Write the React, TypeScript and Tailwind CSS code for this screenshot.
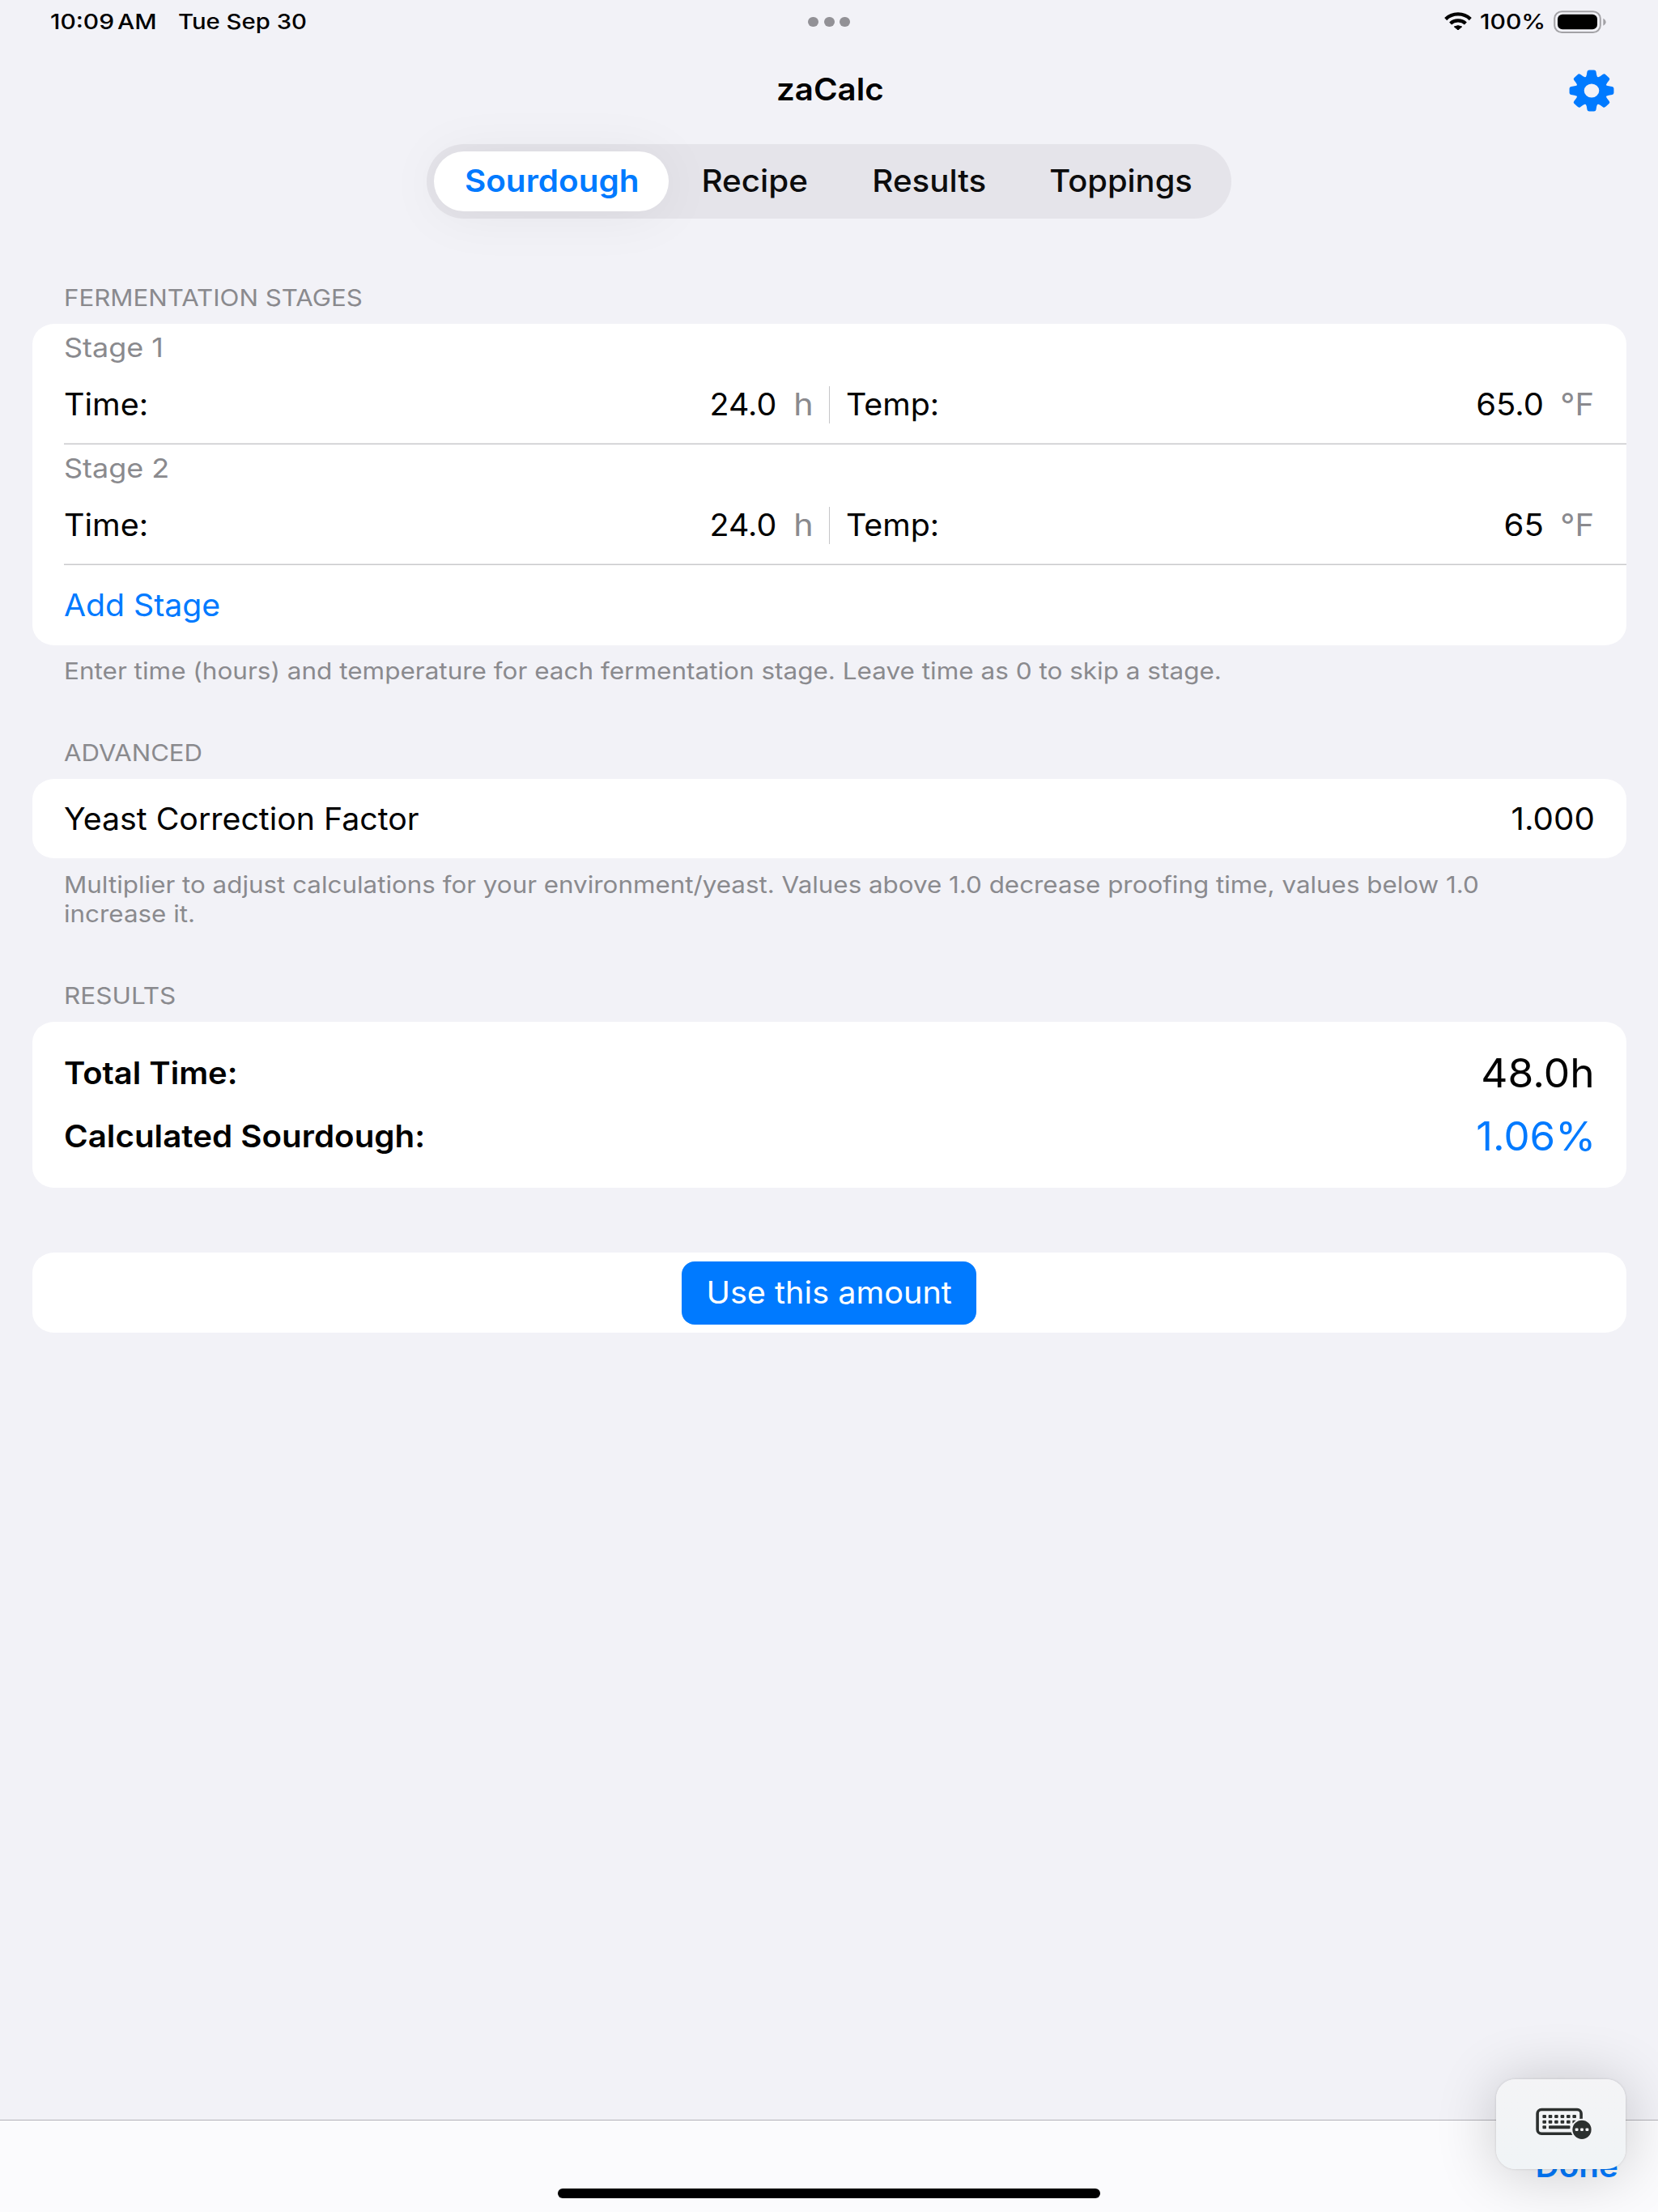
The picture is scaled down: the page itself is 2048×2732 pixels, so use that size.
import type { ReactNode } from "react";

const TOOTH =
  "M-7.8 -15.5Q-6 -17.3 -5.7 -19.5L-5.1 -23.4Q-4.7 -25.4 -2.7 -25.4H2.7Q4.7 -25.4 5.1 -23.4L5.7 -19.5Q6 -17.3 7.8 -15.5Z";

function GearIcon() {
  return (
    <svg className="h-[52px] w-[56px]" viewBox="0 0 56 52">
      <g transform="translate(28 26) scale(1.08 1)" fill="#007aff">
        <circle r="17.9" />
        {[0, 45, 90, 135, 180, 225, 270, 315].map((a) => (
          <path key={a} d={TOOTH} transform={`rotate(${a})`} />
        ))}
        <circle r="8.6" fill="#f2f2f7" />
      </g>
    </svg>
  );
}

function WifiIcon() {
  return (
    <svg className="h-[24px] w-[34px]" viewBox="0 0 34 24" fill="none" stroke="#000">
      <path d="M1.7 8.6A21 19.5 0 0 1 32.3 8.6" strokeWidth="4.3" />
      <path d="M7.6 14A13.3 12.3 0 0 1 26.4 14" strokeWidth="4.3" />
      <path d="M17 21.9L12.3 18Q17 15.4 21.7 18Z" fill="#000" strokeWidth="1" strokeLinejoin="round" />
    </svg>
  );
}

function BatteryIcon() {
  return (
    <svg className="h-[30px] w-[66px]" viewBox="0 0 66 30">
      <rect x="1.2" y="2.2" width="56.6" height="25.8" rx="9" ry="8.5" fill="none" stroke="#a3a2a6" strokeWidth="2" />
      <rect x="5" y="5.8" width="49" height="18.4" rx="6" ry="5.6" fill="#000" />
      <path d="M61.3 10.8Q64.6 12.4 64.6 15.3T61.3 19.8Z" fill="#a3a2a6" />
    </svg>
  );
}

function KeyboardIcon() {
  return (
    <svg className="h-[42px] w-[72px]" viewBox="0 0 72 42">
      <rect x="3.1" y="3.5" width="54" height="29.7" rx="5" fill="none" stroke="#2c302f" strokeWidth="3.6" />
      <g fill="#2c302f">
        {[12, 18.7].map((y) =>
          [11.7, 19, 26.4, 33.9, 41.3, 48.7].map((x) => (
            <rect key={`${x}-${y}`} x={x - 2.3} y={y - 2} width="4.6" height="4" rx="1" />
          )),
        )}
        <rect x="9.4" y="23.3" width="4.6" height="4" rx="1" />
        <rect x="17" y="23.3" width="26.5" height="4" rx="1" />
      </g>
      <circle cx="58" cy="28.3" r="13.6" fill="#f3f4f6" />
      <circle cx="58" cy="28.3" r="11.6" fill="#2c302f" />
      <g fill="#f3f4f6">
        {[51.6, 58, 64.4].map((x) => (
          <rect key={x} x={x - 1.9} y="26.6" width="3.8" height="3.4" rx="1" />
        ))}
      </g>
    </svg>
  );
}

function Card({ className, children }: { className: string; children?: ReactNode }) {
  return <div className={`mx-[39.5px] rounded-[27px/25px] bg-white ${className}`}>{children}</div>;
}

function SectionHeader({ className, children }: { className: string; children: ReactNode }) {
  return (
    <h2 className={`ml-[78.5px] w-fit origin-left text-[29px] font-normal leading-[34px] text-[#8a8a8e] ${className}`}>
      {children}
    </h2>
  );
}

function Stage({ name, time, temp, tempScale }: { name: string; time: string; temp: string; tempScale: string }) {
  return (
    <div className="ml-[39.5px] h-[149px] border-b border-[#cbcbcd] shadow-[inset_0_-1px_0_#e2e2e4]">
      <div className="flex h-[58px] items-center pt-[2px]">
        <span className="origin-left scale-x-[1.09] text-[33px] text-[#8a8a8e]">{name}</span>
      </div>
      <div className="flex h-[83px] items-center pr-[39.5px] text-[38.2px]">
        <div className="flex w-[944.5px] items-center">
          <span className="origin-left scale-x-[1.035]">Time:</span>
          <span className="ml-auto mr-[23px] origin-right scale-x-[1.03]">{time}</span>
          <span className="mr-[19px] origin-right scale-x-[1.08] text-[#8a8a8e]">h</span>
        </div>
        <div className="h-[46px] w-px bg-[#c6c6c8]" />
        <div className="flex flex-1 items-center pl-[20.5px]">
          <span className="origin-left scale-x-[1.03]">Temp:</span>
          <span className={`ml-auto mr-[22px] origin-right ${tempScale}`}>{temp}</span>
          <span className="origin-right scale-x-[1.043] text-[#8a8a8e]">°F</span>
        </div>
      </div>
    </div>
  );
}

export default function App() {
  return (
    <div className="relative flex h-[2732px] w-[2048px] flex-col overflow-hidden whitespace-nowrap bg-[#f2f2f7] font-[Inter,sans-serif] text-black">
      <div className="flex h-[54px] shrink-0 items-center pl-[62px] pr-[63px] text-[26px] font-medium leading-[54px]">
        <div className="flex w-[942px] items-center">
          <span className="origin-left scale-x-[1.152] [word-spacing:-3.5px]">10:09 AM</span>
          <span className="ml-[44px] origin-left scale-x-[1.127]">Tue Sep 30</span>
        </div>
        <div className="-ml-[6px] flex w-[52px] justify-between">
          <i className="h-[12px] w-[13px] rounded-full bg-[#929196]" />
          <i className="h-[12px] w-[13px] rounded-full bg-[#929196]" />
          <i className="h-[12px] w-[13px] rounded-full bg-[#929196]" />
        </div>
        <div className="ml-auto flex items-center">
          <WifiIcon />
          <span className="ml-[10px] mr-[21px] origin-left scale-x-[1.158]">100%</span>
          <BatteryIcon />
        </div>
      </div>

      <header className="grid h-[114px] shrink-0 grid-cols-3 items-center">
        <h1 className="col-start-2 scale-x-[1.055] pl-[2px] text-center text-[38.2px] font-semibold">zaCalc</h1>
        <div className="flex justify-end pr-[54px] pt-[1px]">
          <GearIcon />
        </div>
      </header>

      <nav className="mx-auto mt-[10px] flex h-[92px] w-[994px] shrink-0 items-center rounded-full bg-[#e5e4ea] px-[9px] text-[38.2px] font-medium text-[#0c0c0d]">
        <div className="flex h-[74px] w-[290px] items-center justify-center rounded-full bg-white pl-[2px] font-semibold text-[#007aff] shadow-[0_4px_70px_rgba(0,0,0,0.06)]">
          <span className="scale-x-[1.06]">Sourdough</span>
        </div>
        <div className="flex w-[213px] justify-center">
          <span className="scale-x-[1.058]">Recipe</span>
        </div>
        <div className="flex w-[217px] justify-center">
          <span className="scale-x-[1.055]">Results</span>
        </div>
        <div className="flex w-[256px] justify-center pl-[2px]">
          <span className="scale-x-[1.045]">Toppings</span>
        </div>
      </nav>

      <SectionHeader className="mt-[81px] scale-x-[1.076]">FERMENTATION STAGES</SectionHeader>
      <Card className="mt-[15px] h-[397px] pt-0">
        <Stage name="Stage 1" time="24.0" temp="65.0" tempScale="scale-x-[1.046]" />
        <Stage name="Stage 2" time="24.0" temp="65" tempScale="scale-x-[1.052]" />
        <div className="ml-[39.5px] flex h-[99px] items-center text-[38.2px] text-[#007aff]">
          <span className="origin-left scale-x-[1.027]">Add Stage</span>
        </div>
      </Card>
      <p className="ml-[78.5px] mt-[14px] w-fit origin-left scale-x-[1.086] text-[29px] leading-[36px] text-[#8a8a8e]">
        Enter time (hours) and temperature for each fermentation stage. Leave time as 0 to skip a stage.
      </p>

      <SectionHeader className="mt-[66px] scale-x-[1.073]">ADVANCED</SectionHeader>
      <Card className="mt-[15px] flex h-[98px] items-center justify-between px-[39.5px] pt-[2px] text-[38.2px]">
        <span className="origin-left scale-x-[1.029]">Yeast Correction Factor</span>
        <span className="-mr-[1px] origin-right scale-x-[1.055]">1.000</span>
      </Card>
      <p className="ml-[78.5px] mt-[15px] w-fit origin-left scale-x-[1.081] text-[29px] leading-[36px] text-[#8a8a8e]">
        Multiplier to adjust calculations for your environment/yeast. Values above 1.0 decrease proofing time, values below
        1.0
        <br />
        increase it.
      </p>

      <SectionHeader className="mt-[66px] scale-x-[1.087]">RESULTS</SectionHeader>
      <Card className="mt-[15px] flex h-[205px] flex-col px-[39.5px] pt-[25px] text-[38.2px]">
        <div className="flex h-[78px] items-center justify-between">
          <span className="origin-left scale-x-[1.046] font-semibold">Total Time:</span>
          <span className="-mr-[1px] origin-right scale-x-[1.05] text-[49px]">48.0h</span>
        </div>
        <div className="flex h-[78px] items-center justify-between">
          <span className="origin-left scale-x-[1.056] font-semibold">Calculated Sourdough:</span>
          <span className="-mr-[2px] origin-right scale-x-[1.04] text-[49px] text-[#007aff]">1.06%</span>
        </div>
      </Card>
      <Card className="mt-[80px] flex h-[99px] items-center justify-center">
        <button className="flex h-[78px] w-[364px] items-center justify-center rounded-[16px] bg-[#007aff] text-[38.2px] text-white">
          <span className="scale-x-[1.038]">Use this amount</span>
        </button>
      </Card>

      <footer className="mt-auto flex h-[114px] shrink-0 justify-end border-t border-[#b3b2b8] bg-[#fbfbfd] pr-[49px]">
        <span className="h-[56px] w-fit origin-right scale-x-[1.056] text-[38.2px] font-semibold leading-[112px] text-[#007aff]">
          Done
        </span>
      </footer>
      <div className="absolute bottom-[53px] right-[40px] flex h-[111px] w-[160px] items-center justify-center rounded-[24px] bg-gradient-to-b from-[#f4f4f6] to-[#f0f4f6] shadow-[0_0_3px_rgba(0,0,0,0.15),0_4px_75px_rgba(0,0,0,0.2)]">
        <div className="mb-[1px] ml-[8px] flex">
          <KeyboardIcon />
        </div>
      </div>
      <div className="absolute bottom-[17px] left-[689px] h-[12px] w-[670px] rounded-full bg-black" />
    </div>
  );
}
